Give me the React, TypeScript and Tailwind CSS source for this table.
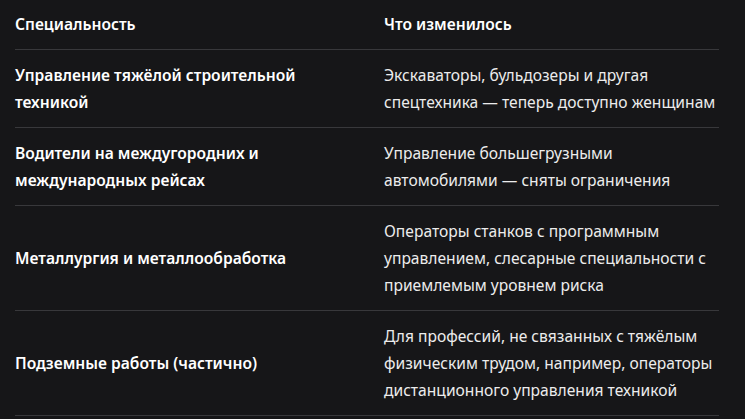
const rows = [
  {
    name: "Управление тяжёлой строительной техникой",
    change: "Экскаваторы, бульдозеры и другая спецтехника — теперь доступно женщинам",
  },
  {
    name: "Водители на междугородних и международных рейсах",
    change: "Управление большегрузными автомобилями — сняты ограничения",
  },
  {
    name: "Металлургия и металлообработка",
    change:
      "Операторы станков с программным управлением, слесарные специальности с приемлемым уровнем риска",
  },
  {
    name: "Подземные работы (частично)",
    change:
      "Для профессий, не связанных с тяжёлым физическим трудом, например, операторы дистанционного управления техникой",
  },
];

const App = () => {
  return (
    <div
      className="min-h-screen w-full bg-[#161618] pl-[15px] pr-[26px] text-[15.6px] leading-[27px] text-[#ececec]"
      style={{ fontFamily: '"Noto Sans", "Open Sans", sans-serif' }}
    >
      <div className="grid grid-cols-[369px_1fr] border-b border-[#38383b] pt-[11px] pb-[11px] font-semibold text-white">
        <div>Специальность</div>
        <div>Что изменилось</div>
      </div>
      {rows.map((row) => (
        <div
          key={row.name}
          className="grid grid-cols-[369px_1fr] items-center border-b border-[#38383b] pt-[12px] pb-[11px]"
        >
          <div className="pr-6 font-semibold text-white">{row.name}</div>
          <div>{row.change}</div>
        </div>
      ))}
    </div>
  );
};

export default App;
